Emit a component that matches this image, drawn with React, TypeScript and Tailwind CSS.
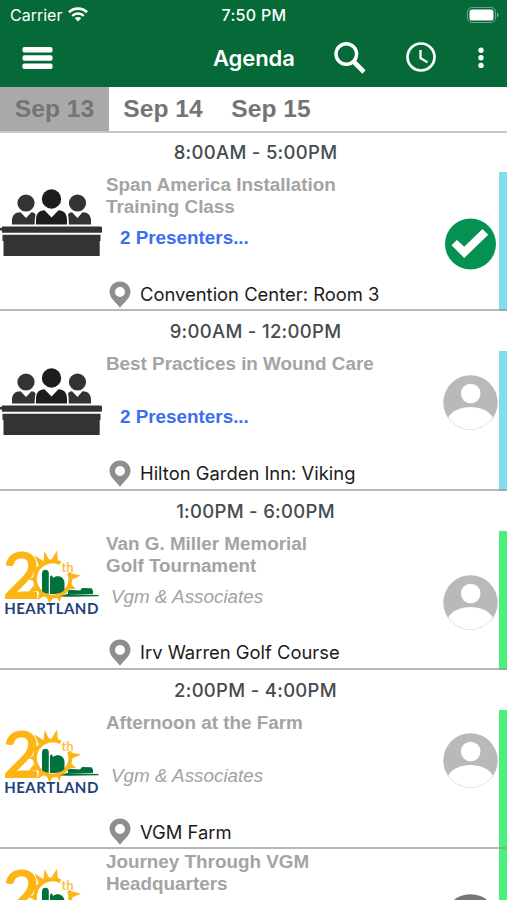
// src/App.tsx
import React, { useState } from "react";

type Session = {
  id: number;
  time?: string;
  title: string[];
  presenters?: string;
  company?: string;
  location: string;
  image: "panel" | "heartland";
  track: "blue" | "green";
  status: "going" | "open" | "dark";
};

const days = ["Sep 13", "Sep 14", "Sep 15"];

const sessions: Session[] = [
  {
    id: 1,
    time: "8:00AM - 5:00PM",
    title: ["Span America Installation", "Training Class"],
    presenters: "2 Presenters...",
    location: "Convention Center: Room 3",
    image: "panel",
    track: "blue",
    status: "going",
  },
  {
    id: 2,
    time: "9:00AM - 12:00PM",
    title: ["Best Practices in Wound Care"],
    presenters: "2 Presenters...",
    location: "Hilton Garden Inn: Viking",
    image: "panel",
    track: "blue",
    status: "open",
  },
  {
    id: 3,
    time: "1:00PM - 6:00PM",
    title: ["Van G. Miller Memorial", "Golf Tournament"],
    company: "Vgm & Associates",
    location: "Irv Warren Golf Course",
    image: "heartland",
    track: "green",
    status: "open",
  },
  {
    id: 4,
    time: "2:00PM - 4:00PM",
    title: ["Afternoon at the Farm"],
    company: "Vgm & Associates",
    location: "VGM Farm",
    image: "heartland",
    track: "green",
    status: "open",
  },
  {
    id: 5,
    title: ["Journey Through VGM", "Headquarters"],
    location: "",
    image: "heartland",
    track: "green",
    status: "dark",
  },
];

function StatusBar() {
  return (
    <div className="grid h-[29px] grid-cols-3 items-center pl-[10px] pr-[8px] text-white font-[Inter,sans-serif]">
      <div className="flex items-center gap-[6px]">
        <span className="text-[16px] leading-5">Carrier</span>
        <svg width="20" height="15" viewBox="0 0 20 15" fill="none" stroke="white">
          <path d="M1 5.2a13 13 0 0 1 18 0" strokeWidth="2.6" />
          <path d="M4.2 8.8a8.3 8.3 0 0 1 11.6 0" strokeWidth="2.5" />
          <path d="M10 14.6l-3.2-3.3a4.6 4.6 0 0 1 6.4 0z" fill="white" stroke="none" />
        </svg>
      </div>
      <span className="pr-px text-center text-[16px] leading-5 font-medium tracking-[0.3px]">7:50 PM</span>
      <svg className="justify-self-end" width="32" height="16" viewBox="0 0 32 16">
        <rect x="0.5" y="0.5" width="28" height="15" rx="4.5" fill="none" stroke="white" strokeOpacity="0.4" />
        <rect x="2.5" y="2.5" width="24" height="11" rx="2.6" fill="white" />
        <path d="M30 5.5c2 .8 2 4.2 0 5z" fill="white" fillOpacity="0.5" />
      </svg>
    </div>
  );
}

function NavBar() {
  return (
    <div className="flex h-[58px] items-center text-white">
      <button className="ml-[22px] w-[31px]">
        <svg width="31" height="22" viewBox="0 0 31 22" fill="white">
          <rect x="0.5" width="30" height="5.6" rx="1.8" />
          <rect x="0.5" y="8.2" width="30" height="5.6" rx="1.8" />
          <rect x="0.5" y="16.4" width="30" height="5.6" rx="1.8" />
        </svg>
      </button>
      <h1 className="ml-[160px] w-[82px] text-[22px] leading-7 font-semibold tracking-[-0.1px] whitespace-nowrap font-[Inter,sans-serif]">
        Agenda
      </h1>
      <button className="ml-[39px]">
        <svg width="32" height="32" viewBox="0 0 32 32" fill="none" stroke="white">
          <circle cx="12.3" cy="12" r="10.3" strokeWidth="3.4" />
          <path d="M19.5 19.5L30 30" strokeWidth="4.6" />
        </svg>
      </button>
      <button className="ml-[39px]">
        <svg width="32" height="32" viewBox="0 0 32 32" fill="none" stroke="white">
          <circle cx="16" cy="15" r="13.5" strokeWidth="2.7" />
          <path d="M15.5 8v8l7 4.4" strokeWidth="2.3" />
        </svg>
      </button>
      <button className="ml-[41px]">
        <svg width="6" height="22" viewBox="0 0 6 22" fill="white">
          <circle cx="3" cy="3.2" r="2.7" />
          <circle cx="3" cy="10.8" r="2.7" />
          <circle cx="3" cy="18.4" r="2.7" />
        </svg>
      </button>
    </div>
  );
}

function PanelImage() {
  return (
    <svg width="103" height="68" viewBox="0 0 103 68" fill="#333333">
      <circle cx="26" cy="14" r="8.6" />
      <circle cx="77.5" cy="14" r="8.6" />
      <path d="M12 35.5v-4c0-5 3-8.3 8.5-8.3l5.5 5.8 5.5-5.8c2 0 3 .8 4 2.2-.6 3-.8 6-.8 10.1z" />
      <path d="M91 35.5v-4c0-5-3-8.3-8.5-8.3l-5 5.8-5.5-5.8c-2 0-3 .8-4 2.2.6 3 .8 6 .8 10.1z" />
      <circle cx="51.5" cy="10" r="9.7" fill="#1d1d1d" />
      <path d="M36 35.5v-4.5c0-6.5 3-9.5 8.5-9.8l7 7.3 7-7.3c5.5.3 8.5 3.3 8.5 9.8v4.5z" fill="#1d1d1d" />
      <path d="M0 39h1.5c0-1 .8-1.5 1.5-1.5h97.5c1 0 1.5.6 1.5 1.5v3.2c0 1-.5 1.6-1.5 1.6h-98.5v-2.3h-2z" />
      <path d="M2.5 45.8h98v6.2h-.8v15h-96.2v-15h-1z" />
    </svg>
  );
}

function HeartlandLogo() {
  return (
    <svg width="103" height="68" viewBox="0 0 103 68">
      <text x="2.5" y="50.5" fontSize="65" fontWeight="700" fill="#fdb515" fontFamily="Lato, sans-serif">
        2
      </text>
      <circle cx="52.5" cy="31" r="20" fill="white" />
      {/* sun rays */}
      <g fill="#fdb515">
        <path d="M34.5 7.5l9.5 6-5 4.5z" />
        <path d="M44.5 3l5 9.5-6 1.5z" />
        <path d="M57 2.5l1 11.5-7-1.5z" />
        <path d="M81 27.5l-11 5-1-7.5z" />
        <path d="M76 41h-9.5l3-6.5z" />
        <path d="M29 19.5l9-.5-3 6z" />
        <path d="M28.5 31l7-3v6z" />
        <path d="M28.5 44l6-7.5 4 6.5z" />
        <path d="M37.5 52l2-9 5.5 4.5z" />
        <path d="M49.5 55.5l-3.5-7.5h8z" />
        <path d="M60 54l-4.5-6 6.5-4z" />
      </g>
      <path d="M60.5 15.2a17.6 17.6 0 1 0 8.5 9.3" fill="none" stroke="#fdb515" strokeWidth="3.8" />
      {/* silo and barn */}
      <g fill="#00703c">
        <path d="M42 43v-18c0-4.5 6.8-4.5 6.8 0v20.8c-3-.2-5-1-6.8-2.8z" />
        <path d="M50 46v-17c1.5-2.5 2.8-1.5 2.8 1 5-4 11.7-1 11.7 5v7c-3 3-7 4.5-14.5 4z" />
        <path d="M60 48.5l7-2.5 31.5 1v1.3l-30 .5z" />
        <path d="M68 46v-3.2l1.8-1 10.2.7 2-2.5 9.5.3 1.5 2.2v3.5z" />
      </g>
      <text x="61.5" y="23.5" fontSize="13" fontWeight="700" fill="#fdc04a" fontFamily="Lato, sans-serif">
        th
      </text>
      <text
        x="4.2"
        y="66"
        fontSize="15"
        fontWeight="700"
        fill="#1f3f7d"
        letterSpacing="0.5"
        fontFamily="Lato, sans-serif"
      >
        HEARTLAND
      </text>
    </svg>
  );
}

function PinIcon() {
  return (
    <svg width="22" height="27" viewBox="0 0 22 27">
      <path
        d="M11 0.5C5 0.5 0.5 5 0.5 10.7c0 6.5 6.5 10.3 10.5 16 4-5.7 10.5-9.5 10.5-16C21.5 5 17 0.5 11 0.5zM11 6a5 5 0 1 1 0 10 5 5 0 0 1 0-10z"
        fill="#8e8e8e"
        fillRule="evenodd"
      />
    </svg>
  );
}

function StatusIcon({ status }: { status: Session["status"] }) {
  if (status === "going") {
    return (
      <svg width="55" height="55" viewBox="0 0 55 55">
        <circle cx="27.5" cy="27" r="25.5" fill="#059152" />
        <path d="M8.5 28.2l5.5-5.2 7.2 6.8L39.5 12l5.7 5.8L21.2 41z" fill="white" />
      </svg>
    );
  }
  return (
    <svg width="55" height="55" viewBox="0 0 55 55">
      <circle cx="27.5" cy="27.5" r="27.2" fill={status === "dark" ? "#757575" : "#b9b9b9"} />
      <circle cx="27.7" cy="18.5" r="9.8" fill="white" />
      <path d="M5.2 42.5C9 35.5 18 32 27.5 32s18.5 3.5 22.3 10.5A26.8 26.8 0 0 1 5.2 42.5z" fill="white" />
    </svg>
  );
}

function SessionRow({ session }: { session: Session }) {
  return (
    <div>
      {session.time && (
        <div className="flex h-10 items-center justify-center pl-[4px] text-[18.5px] leading-6 font-medium tracking-[0.3px] text-[#454c50] font-[Inter,sans-serif]">
          {session.time}
        </div>
      )}

      <div className="relative flex h-[139.3px]">
        <div className="w-[103px] pt-[17px]">
          {session.image === "panel" ? <PanelImage /> : <HeartlandLogo />}
        </div>

        {/* title, presenter and room */}
        <div className="flex-1 pl-[3px]">
          <div className="h-[54px] pt-[2px] text-[18.85px] leading-[22.3px] font-bold whitespace-nowrap text-[#a2a4a5] font-['Liberation_Sans',sans-serif]">
            {session.title.map((line) => (
              <p key={line}>{line}</p>
            ))}
          </div>
          {session.presenters && (
            <p className="pl-[14px] text-[18.85px] leading-6 font-bold text-[#3b6ff0] font-['Liberation_Sans',sans-serif]">
              {session.presenters}
            </p>
          )}
          {session.company && (
            <p className="pl-[5px] text-[18.85px] leading-6 text-[#a2a2a2] italic font-['Liberation_Sans',sans-serif]">
              {session.company}
            </p>
          )}
          {session.location && (
            <div className="mt-[30px] flex h-7 items-center gap-[9px] pl-[3px]">
              <PinIcon />
              <span className="pt-px text-[18.4px] whitespace-nowrap text-[#1c1c1c] font-[Inter,sans-serif]">
                {session.location}
              </span>
            </div>
          )}
        </div>

        <div className={session.title.length > 1 ? "w-[56px] pt-[44.5px]" : "w-[56px] pt-[23.5px]"}>
          <StatusIcon status={session.status} />
        </div>
        <div className={session.track === "blue" ? "w-2 bg-[#81dcec]" : "w-2 bg-[#4bf07a]"} />
        <div className="absolute inset-x-0 bottom-0 h-[2px] bg-[#999999]/70" />
      </div>
    </div>
  );
}

export default function App() {
  const [activeDay, setActiveDay] = useState("Sep 13");

  return (
    <div className="h-[900px] w-[507px] overflow-hidden bg-white">
      <header className="bg-[#056a38]">
        <StatusBar />
        <NavBar />
      </header>

      <div className="flex h-[46px] border-b-2 border-[#c8c8c8]">
        {days.map((day) => (
          <button
            key={day}
            onClick={() => setActiveDay(day)}
            className={
              day === activeDay
                ? "w-[109px] bg-[#a9a9a9] pt-px text-center text-[24.6px] font-bold whitespace-nowrap text-[#747474] font-['Liberation_Sans',sans-serif]"
                : "w-[108px] pt-px text-center text-[24.6px] font-bold whitespace-nowrap text-[#747474] font-['Liberation_Sans',sans-serif]"
            }
          >
            {day}
          </button>
        ))}
      </div>

      <main className="-mt-px">
        {sessions.map((session) => (
          <SessionRow key={session.id} session={session} />
        ))}
      </main>
    </div>
  );
}
